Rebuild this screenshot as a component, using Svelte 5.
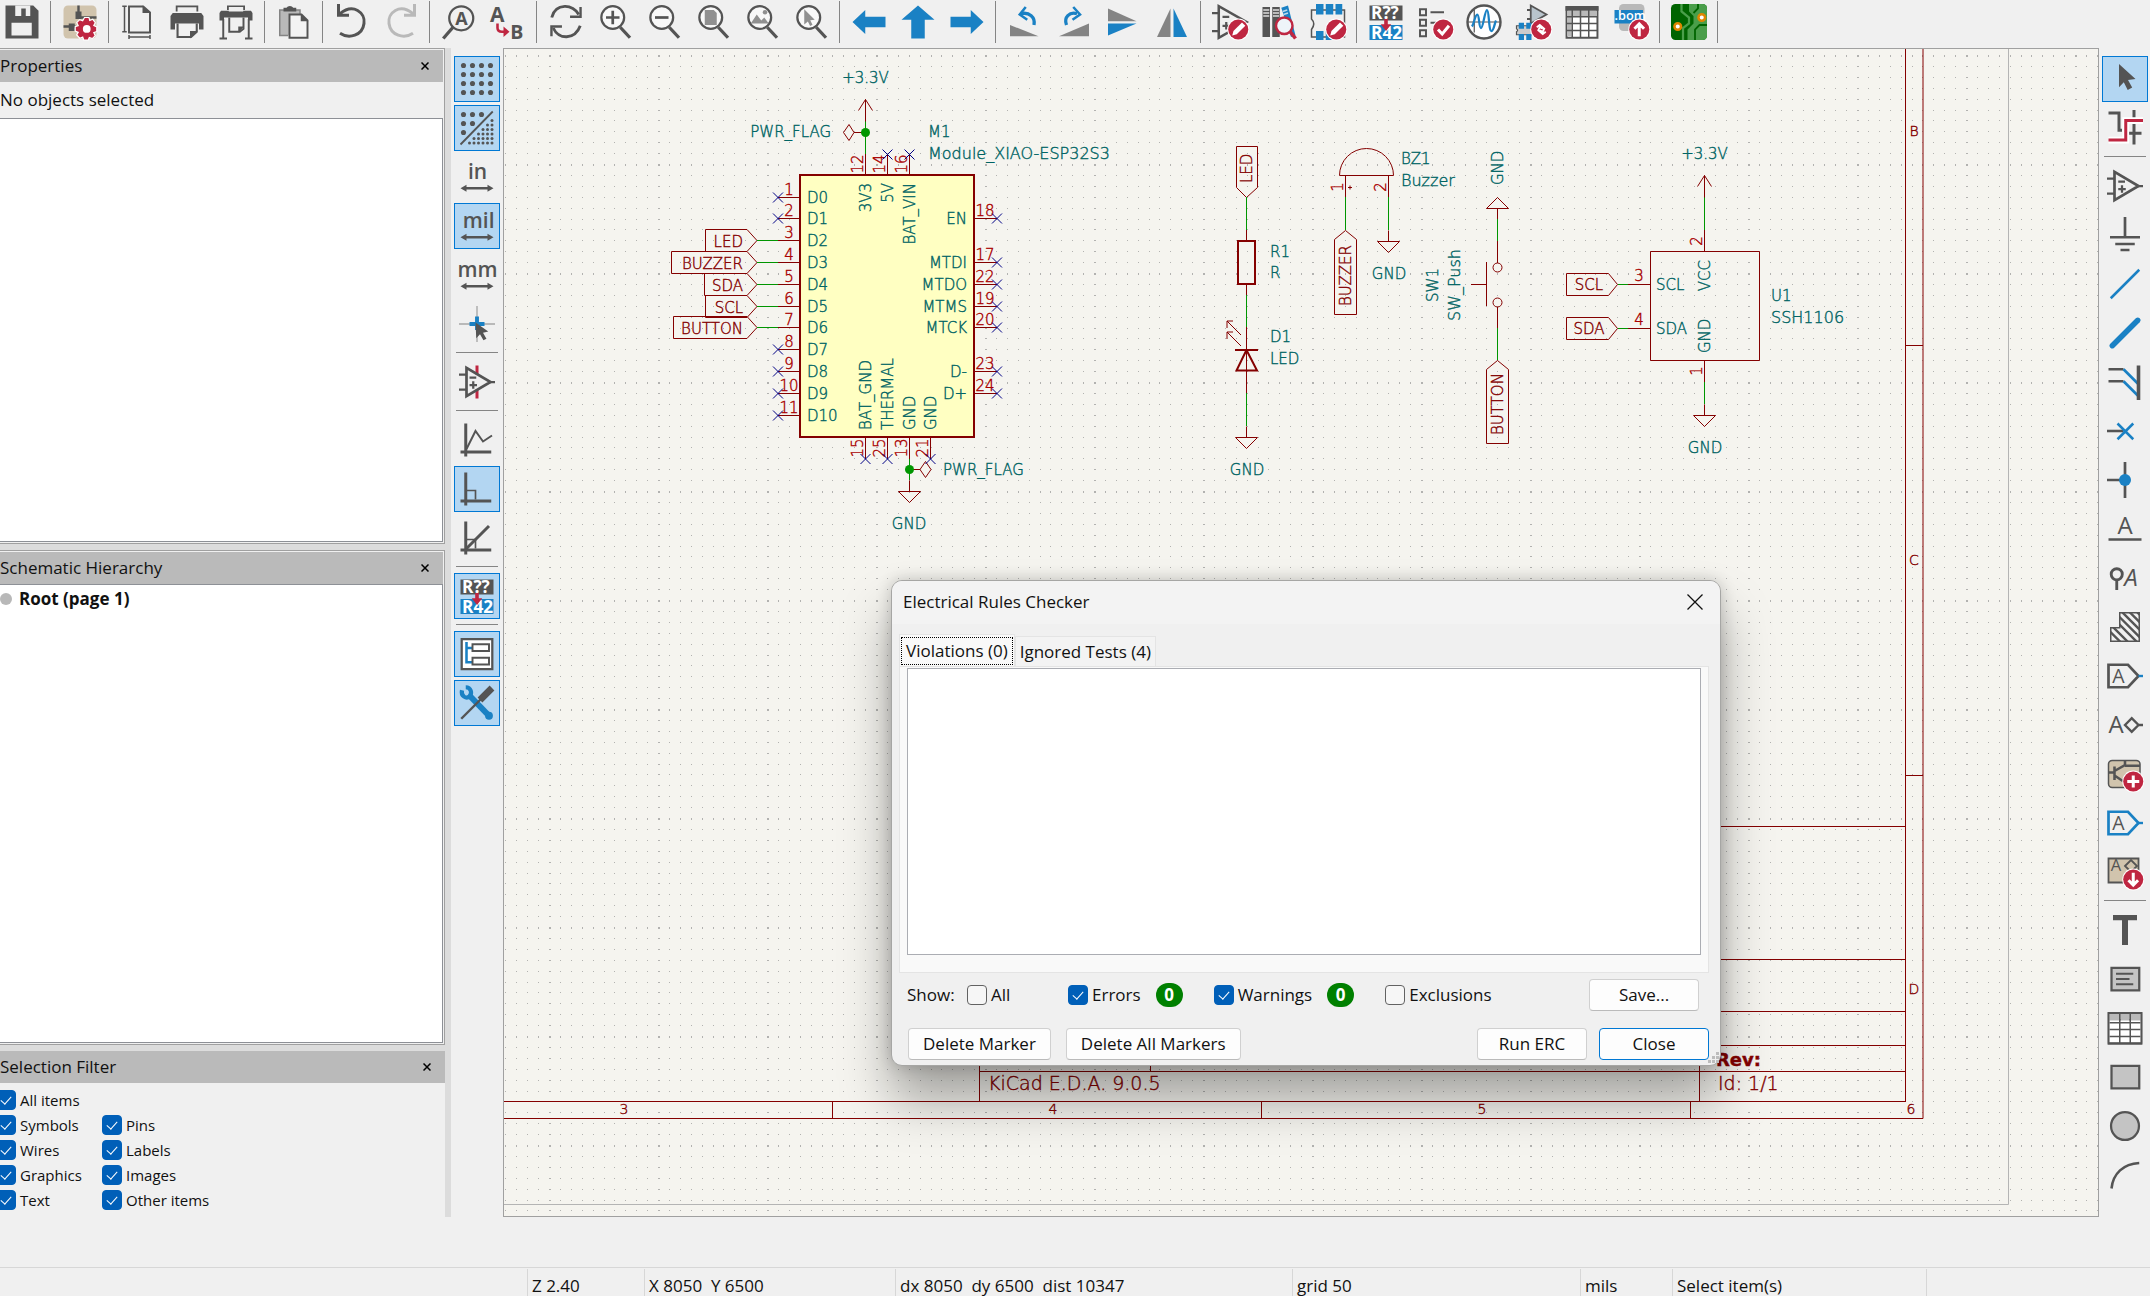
<script lang="ts">
	type Tool = { icon: string; label: string; active?: boolean };

	const sep = null;
	const tool = (icon: string, label: string, active = false): Tool => ({ icon, label, active });

	const topTools: (Tool | null)[] = [
		tool('save', 'Save'), sep,
		tool('setup', 'Schematic Setup'), sep,
		tool('page', 'Page Settings'), tool('print', 'Print'), tool('plot', 'Plot'), sep,
		tool('paste', 'Paste'), sep,
		tool('undo', 'Undo'), tool('redo', 'Redo'), sep,
		tool('find', 'Find'), tool('replace', 'Find and Replace'), sep,
		tool('refresh', 'Refresh'), tool('zoomIn', 'Zoom In'), tool('zoomOut', 'Zoom Out'), tool('zoomPage', 'Zoom to Fit'),
		tool('zoomObjects', 'Zoom to Objects'), tool('zoomSelection', 'Zoom to Selection'), sep,
		tool('left', 'Navigate Back'), tool('up', 'Navigate Up'), tool('right', 'Navigate Forward'), sep,
		tool('rotateCcw', 'Rotate Counterclockwise'), tool('rotateCw', 'Rotate Clockwise'), tool('mirrorV', 'Mirror Vertically'),
		tool('mirrorH', 'Mirror Horizontally'), sep,
		tool('symbolEditor', 'Symbol Editor'), tool('library', 'Symbol Library Browser'), tool('footprint', 'Footprint Editor'), sep,
		tool('annotate', 'Annotate Schematic'), tool('erc', 'Electrical Rules Checker'), tool('simulator', 'Simulator'),
		tool('assign', 'Assign Footprints'), tool('table', 'Edit Symbol Fields'), tool('bom', 'Generate BOM'), sep,
		tool('pcb', 'Switch to PCB Editor'), sep
	];

	const leftTools: (Tool | null)[] = [
		tool('grid', 'Show Grid', true), tool('gridOverride', 'Grid Overrides', true), tool('inches', 'Inches'),
		tool('mils', 'Mils', true), tool('mm', 'Millimeters'), tool('crosshair', 'Full-Window Crosshairs'), sep,
		tool('hiddenPins', 'Show Hidden Pins'), sep,
		tool('freeAngle', 'Line Mode Free'), tool('angle90', 'Line Mode 90', true), tool('angle45', 'Line Mode 45'), sep,
		tool('annotate', 'Annotate Automatically', true), sep,
		tool('tree', 'Hierarchy Navigator', true), tool('wrench', 'Properties Manager', true)
	];

	const rightTools: (Tool | null)[] = [
		tool('select', 'Select', true), tool('highlight', 'Highlight Nets'), sep,
		tool('opamp', 'Place Symbols'), tool('ground', 'Place Power Symbols'), tool('wire', 'Draw Wires'), tool('bus', 'Draw Buses'),
		tool('busEntry', 'Wire to Bus Entry'), tool('noConnect', 'No Connect Flag'), tool('junction', 'Place Junction'),
		tool('netLabel', 'Net Label'), tool('directive', 'Directive Label'), tool('ruleArea', 'Rule Area'),
		tool('globalLabel', 'Global Label'), tool('hierLabel', 'Hierarchical Label'), tool('addSheet', 'Draw Sheet'),
		tool('sheetPin', 'Place Sheet Pins'), tool('importPin', 'Import Sheet Pins'), sep,
		tool('text', 'Text'), tool('textBox', 'Text Box'), tool('grayTable', 'Table'), tool('rect', 'Rectangle'),
		tool('circle', 'Circle'), tool('arc', 'Arc')
	];

	const D = '#545454';
	const B = '#1a81c4';
	const R = '#bf2641';
	const line = (d: string, c = D, w = 1.5) => `<path d="${d}" fill="none" stroke="${c}" stroke-width="${w}"/>`;
	const fill = (d: string, c = D) => `<path d="${d}" fill="${c}"/>`;
	const badge = `<circle cx="17.500" cy="17" r="7.300" fill="#fff"/><circle cx="17.500" cy="17" r="6.700" fill="${R}"/>`;
	const pencil = badge + fill('M13.500 21l.8-3 5.700-5.700 2.200 2.200-5.700 5.700z', '#fff');
	const lens = '<circle cx="10.5" cy="9" r="7.6" fill="#f8f8f8" stroke="#545454" stroke-width="1.5"/>' + line('M15.5 15.5l6.5 7', D, 2.2);
	const opampBody = line('M5 2.5v19L21 12z', D, 1.8);
	const axes = fill('M3.5 1h2v18h16v2h-16v2h-2v-2H1v-2h2.5z');
	const letter = (t: string, x: number, y: number, size: number, c = D, extra = '') =>
		`<text x="${x}" y="${y}" font-size="${size}" fill="${c}" font-family="Open Sans, sans-serif" ${extra}>${t}</text>`;
	const gridDots = (pts: number[][], r: number) => pts.map(([x, y]) => `<circle cx="${x}" cy="${y}" r="${r}" fill="${D}"/>`).join('');
	const arrows = fill('M1 19.5l4-2.3v1.5h14v-1.5l4 2.3-4 2.3v-1.5H5v1.5z');
	const cells = line('M1.7 8.5h20.6M1.7 13h20.6M1.7 17.7h20.6M8.5 6v16M15.5 6v16', D, 1);

	const icons: Record<string, string> = {
		save: fill('M1 1h18.5L23 4.5V23H1z') + fill('M7.5 1h10v7h-10zM5 12.5h13.5V21H5z', '#efefef') + fill('M11.5 3h3v5h-3z'),
		setup: '<rect x="1" y="1" width="22" height="22" rx="3" fill="#d1c4ad"/>' + line('M11 1v9M1 15h8M11 9h12', D, 1.6) + fill('M9 5h4v5H9zM4.500 13h4v5h-4z') +
			`<g fill="${R}" stroke="#fff" stroke-width=".8"><path d="M15 9h3l.5 2 2-.8 1.700 2.300-1 1.800 2 1v3l-2 .8 1 2-2 2-2-.8-.7 1.700h-3l-.7-2-2 .8-2-2.200 1-1.700-2-.8v-3l2-.7-1-2 2-2 2 .8z"/></g><circle cx="16.500" cy="16.600" r="2.600" fill="#fff"/>`,
		page: line('M6 1.600h9.500l4.500 4V19H6z', D, 1.300) + line('M1.500 1.500h3M3 1.500v17M1.500 18.500h3M6 22h14M6 20.700v2.600M20 20.700v2.600', D, 1) + fill('M15 1l5 5h-5z'),
		print: fill('M4.500 1h15v4h-15zM2.500 6h19L23 8v9h-3v-4H4v4H1V8z') + fill('M5.700 2.200h12.600V6H5.700z', '#efefef') + line('M5.700 13v9h9l3.800-3.500V13', D, 1.400) + fill('M14 18h5l-5 5z'),
		plot: fill('M6 1h12v3H6zM2 4.500h20l1 1.500v5h-3v-2H4v2H1V6z') + fill('M7.200 2h9.600v3H7.200z', '#efefef') + line('M7.500 9v9.500h7l2.500-2V9M3.500 10v13M20.500 10v13M1 23h5M18 23h5', D, 1.300) + fill('M13.500 15h4l-4 4z'),
		paste: '<path d="M2 4h14v17H2z" fill="#b9b9b9"/>' + line('M2.500 4v17h5.500M2 4h14v3', '#848484', 1) + fill('M5 2.500h2a2.500 2 0 0 1 4.500 0h2V5H5z') +
			'<path d="M9 7h8l4 4v11.500H9z" fill="#f3f3f3" stroke="#545454" stroke-width="1.300"/>' + fill('M16.500 6.500l5 5h-5z'),
		undo: line('M4 6.500C13-1 21 6 20 13c-1 8-10 10.500-16 6.500', D, 2) + line('M3 0v7.500h7', D, 2),
		redo: line('M20 6.500C11-1 3 6 4 13c1 8 10 10.500 16 6.500', '#b9b9b9', 2) + line('M21 0v7.500h-7', '#b9b9b9', 2),
		find: '<circle cx="13.500" cy="9.500" r="8" fill="none" stroke="#545454" stroke-width="1.500"/>' + line('M8 15.500L1.500 23', D, 2.200) + letter('A', 9.5, 13.8, 12, D, 'font-weight="700"'),
		replace: letter('A', 0, 12, 14, D, 'font-weight="700"') + letter('B', 13.5, 23, 13, D, 'font-weight="700"') + line('M5 13v3q0 2.500 3 2.500h2', R, 1.700) + fill('M9 15l4 3.500L9 22z', R),
		refresh: line('M2.500 9C5-1 17 0 20.500 7M21.500 14.500C18 24 7 24 3.500 16', D, 1.900) + line('M21.700 2v6.500h-7M2.300 21.500V15h7', D, 1.600),
		zoomIn: lens + line('M10.500 4.500v9M6 9h9', D, 1.800),
		zoomOut: lens + line('M6 9h9', D, 1.800),
		zoomPage: lens + fill('M6.500 4h6l2 2v8h-8z', '#909090'),
		zoomObjects: lens + fill('M4.500 13l4-6 3 4 2-2 3 4z', '#909090') + '<circle cx="14" cy="5.500" r="1.500" fill="#909090"/>',
		zoomSelection: lens + fill('M7.500 3.500l7 7-3 .3 1.500 3-1.600.8-1.500-3-2.400 2z', '#909090'),
		left: fill('M1 12l8.500-8v4.500H23v7H9.500V20z', B),
		up: fill('M12 1l11 9.500h-6.500V23h-9V10.500H1z', B),
		right: fill('M23 12l-8.500-8v4.500H1v7h13.500V20z', B),
		rotateCcw: fill('M2 14v7.500h19z', '#848484') + line('M18 14c1-5-3-9-9-7.500', B, 2.200) + line('M12.500 2L8.500 7l5 3.500', B, 1.700),
		rotateCw: fill('M22 13v8.500H2z', '#848484') + line('M7 14C5 9 9 5 14 6.500', B, 2.200) + line('M11.500 2l4.500 5-5 3.500', B, 1.700),
		mirrorV: fill('M2 3v8.500h19z', '#848484') + fill('M2 13h19L2 21z', B),
		mirrorH: fill('M11 3v19H2z', '#848484') + fill('M13 3v19h9z', B),
		symbolEditor: line('M4.500 1.500v21L23 12z', D, 1.700) + line('M0 6h4.500M0 18h4.500M7 8.500h4.500M7 14.500h5M9.500 12v5', D, 1.500) + pencil,
		library: fill('M1 2h5v20H1zM7.500 2h5v20h-5z') + line('M1.500 4h4M1.500 6h4M1.500 8h4M8 4h4M8 6h4M8 8h4', '#ddd', 1) + fill('M13.500 2.500l4.500-1.500 5 20-3 1z', B) + line('M14.500 5l3-1M15 7l3-1', '#bcd9ec', 1) +
			`<circle cx="15.500" cy="14.500" r="5.500" fill="#eef4f9" stroke="${R}" stroke-width="1.600"/>` + line('M19.500 18.500l3.500 4.500', R, 2.400),
		footprint: '<path d="M1 4h22v18H1v-5q3-4 0-7z" fill="#f0f0f0" stroke="#545454" stroke-width="1"/>' + fill('M4 0h5v7H4zM10.500 0h5v7h-5zM17 0h4.500v7H17zM4 18h5v6H4zM10.500 18h4v6h-4z', B) + pencil,
		annotate: fill('M1 1h22v10H1z') + fill('M1 14h22v10H1z', B) + letter('R??', 2, 10, 11.5, '#fff', 'font-weight="700"') + letter('R42', 2, 23.200, 11.5, '#fff', 'font-weight="700"') + fill('M10.800 10h2.400v3.500H15.500L12 18l-3.500-4.500h2.300z', R),
		erc: line('M2 3.500h4v4H2zM2 10.500h4v4H2zM2 17.500h4v4H2zM9 5.500h9M9 12.500h5', D, 1.300) + badge + line('M14 17l2.800 3 4.500-5.500', '#fff', 2),
		simulator: '<circle cx="12" cy="12" r="11" fill="#fff" stroke="#545454" stroke-width="1.600"/>' + line('M5.500 4v15M1 12h22', D, .8) + line('M4 15c1.500-2 2-8 3.500-8S8.500 16 10 16 12.500 4 14 4s1 14 3 14c1.500 0 2-5 3-7', B, 1.500),
		assign: fill('M10 1l11 6.500L10 13z', '#b8c4cc') + line('M10.500 1v12L21 7zM8 4h3M8 10h3', D, 1.200) + '<path d="M1 14.500h14v6H1v-2q1.500-1 0-2z" fill="#ccc" stroke="#545454" stroke-width=".8"/>' + fill('M2.500 12.500h3.500v4H2.500zM7.500 12.500h3.500v4H7.500zM2.500 20h3.500v4H2.500zM7.500 20h3.500v4H7.500z', B) + badge + line('M14.500 15.500l2-1.500 3 2.500-1 2-2-1M20.500 18.500l-2 1.500-3-2.500 1-2 2 1', '#fff', 1.200),
		table: '<path d="M1.700 2h20.600v20.500H1.700z" fill="#fff" stroke="#545454" stroke-width="1.300"/>' + fill('M2 4.500h20v4H2zM2 4.500h3v17H2z', '#b9b9b9') + fill('M1 1.500h22v3H1z') + line('M1.700 8.500h20.600M1.700 13h20.600M1.700 17.700h20.600M5.500 4v18M11 4v18M16.500 4v18', D, 1),
		bom: '<rect x="4" y="0" width="17" height="18" rx="3" fill="#b9b9b9"/>' + fill('M1 4h19v9H1z', B) + letter('.bom', 1, 10.800, 8.5, '#fff', 'font-weight="600"') + badge + line('M17.500 21.500v-8M14.300 16.500l3.200-3.200 3.200 3.200', '#fff', 2),
		pcb: '<rect x="0" y="0" width="24" height="24" rx="3" fill="#006400"/><path d="M14 0h7q3 0 3 3v18q0 3-3 3h-10v-7l4-4V8l-3-3V0z" fill="#4a9e4a"/>' + line('M7 0v5l5 4v4l-4 3v8', '#4a9e4a', 1.500) + line('M18 0v3l-3 3M24 14h-5l-3 3v7', '#006400', 1.200) +
			'<circle cx="4.500" cy="15" r="2.200" fill="#fff" stroke="#e08600" stroke-width="1.700"/><circle cx="20.500" cy="9" r="2.200" fill="#fff" stroke="#e08600" stroke-width="1.700"/>',
		grid: gridDots([3, 9, 15, 21].flatMap((x) => [3, 9, 15, 21].map((y) => [x, y])), 1.7),
		gridOverride: gridDots([[3, 3], [9, 3], [15, 3], [3, 9], [9, 9], [3, 15]], 1.7) + line('M1 23L22.500 1', D, 1.200) +
			gridDots([[22, 7], [22, 10], [19, 10], [22, 13], [19, 13], [16, 13], [22, 16], [19, 16], [16, 16], [13, 16], [22, 19], [19, 19], [16, 19], [13, 19], [10, 19], [22, 22], [19, 22], [16, 22], [13, 22], [10, 22], [7, 22]], 1),
		inches: letter('in', 6, 13, 14, D, 'font-weight="600"') + arrows,
		mils: letter('mil', 2.5, 13, 14, D, 'font-weight="600"') + arrows,
		mm: letter('mm', -1, 13, 14, D, 'font-weight="600"') + arrows,
		crosshair: line('M12 0v24M0 12h24', '#b9b9b9', 1.200) + line('M12 7v9M7 12h10', B, 2.600) + fill('M11 11l8.500 6-3.500.8 2.300 4-2 1-2.300-4-2.500 2.700z'),
		opamp: opampBody + line('M0 7h5M0 17h5M20 12h4M7.500 9h4.500M7.500 14h5M10 11.500v5', D, 1.500),
		hiddenPins: line('M12 1v6M12 17v6', R, 2) + opampBody + line('M0 7h5M0 17h5M20 12h4M7 9h4.500M7 14h5M9.500 11.500v5', D, 1.500),
		freeAngle: axes + line('M5 18l6-12 5 7 6-4', D, 1.300),
		angle90: axes + line('M5 13h6v6', D, 1.100),
		angle45: axes + line('M5 19L20 4', D, 2) + line('M5 13h6v6', D, 1.100),
		tree: '<path d="M1.800 2h20.400v20H1.800z" fill="#fff" stroke="#545454" stroke-width="1.500"/>' + line('M5 4v13.500h4M5 8h4', B, 1.700) + line('M9 5.500h11v4.500H9zM9 14.500h11v4.500H9z', D, 1.300),
		wrench: line('M6.500 6.500L19.500 20', B, 4) + line('M2 3.500c-1 4 3 6 5 4s1-6-2.500-6', B, 2.800) + `<circle cx="20" cy="20.500" r="2.600" fill="${B}"/>` + line('M1.500 22.500L15 9', D, 1.600) + line('M14 10l8-8', D, 4.500),
		select: fill('M8 2l11 10-5 .7 2.800 5-3 1.700-2.600-5.200L8 17.500z'),
		highlight: line('M1 2h7v10M8 6v7.500h2M18 0v23M11 15.500h12', D, 2) + line('M1 20h11.500V7H24', '#fff', 4.500) + line('M1 20h11.500V7H24', R, 2),
		ground: line('M12 0v13', D, 1.800) + line('M2 13.500h20M5.500 18h13M9 22h6', D, 1.800),
		wire: line('M2.500 21.500l19-19', B, 1.700),
		bus: `<path d="M3.500 20.500l17-17" stroke="${B}" stroke-width="3.600" stroke-linecap="round"/>`,
		busEntry: line('M1 3.500h10M1 11.500h10', D, 1.600) + line('M11 3.500l10 10M11 11.500l10 10', B, 1.800) + line('M21 1v23', D, 2.400),
		noConnect: line('M0 12h11', D, 1.700) + line('M7 7l10.500 10.500M17.500 7L7 17.500', B, 1.700),
		junction: line('M12 0v24M0 12h12', D, 1.800) + `<circle cx="12" cy="12" r="4" fill="${B}"/>`,
		netLabel: letter('A', 7, 15.5, 16) + line('M1 19h22', D, 1.700),
		directive: '<circle cx="6.500" cy="9.500" r="3.700" fill="none" stroke="#545454" stroke-width="1.900"/>' + line('M6.500 13v7', D, 1.900) + letter('A', 11.500, 17.500, 16, D, 'font-style="italic"'),
		ruleArea: '<clipPath id="hatch"><path d="M8 2h14v20H2V12h6z"/></clipPath><g clip-path="url(#hatch)">' + line('M2 10l14 14M2 15l9 9M5 7l18 18M7 4l18 18M7-1l18 18M13 0l12 12M18 0l8 8', D, 1.600) + '</g>' + line('M8.500 2.500h13v19h-19v-9h6z', D, 1),
		globalLabel: line('M1 4.500h13L21 12l-7 7.500H1z', D, 1.800) + letter('A', 3.500, 16.800, 13) + line('M21 12h3', B, 1.600),
		hierLabel: letter('A', 1, 17.500, 16) + line('M12 12l4.500-4.500L21 12l-4.500 4.500zM21 12h3', D, 1.600),
		addSheet: '<rect x="1" y="3" width="21" height="18" rx="2.500" fill="#d1c4ad" stroke="#545454"/>' + line('M1 11h4M5 7v9M5 10l7-4V3M5 13l6 4M12 6.500h10', D, 1.700) + badge + line('M17.500 13v8M13.500 17h8', '#fff', 2),
		sheetPin: line('M1 4.500h13L21 12l-7 7.500H1z', B, 1.800) + letter('A', 3.500, 16.800, 13) + line('M21 12h3', B, 1.600),
		importPin: '<path d="M1 3h20v16H1z" fill="#d1c4ad" stroke="#545454" stroke-width="1.200"/>' + letter('A', 2.500, 11.500, 11) + line('M12 8l4-4 4 4-4 4z', D, 1.200) + badge + line('M17.500 12.500v8M14.300 17.500l3.200 3.200 3.200-3.200', '#fff', 2),
		text: fill('M4 2h16v3.500h-6V22h-4V5.500H4z'),
		textBox: '<path d="M3 4.500h18.500v15H3z" fill="#c4c4c4" stroke="#545454" stroke-width="1.500"/>' + line('M6 8.500h11.500M6 12h9M6 15.500h11.500', D, 1.300),
		grayTable: '<path d="M1 2h22v20H1z" fill="#fff" stroke="#545454"/>' + fill('M1 2h22v5H1z', '#b9b9b9') + line('M1 2h22v20.500H1z', D, 1.200) + cells + line('M8.500 2v5M15.500 2v5', D, 1),
		rect: '<path d="M3 4.500h18.500v15H3z" fill="#c4c4c4" stroke="#545454" stroke-width="1.500"/>',
		circle: '<circle cx="12" cy="12" r="9.300" fill="#c4c4c4" stroke="#545454" stroke-width="1.500"/>',
		arc: line('M3 21C4 11 11 4.500 21.500 4', D, 1.700)
	};

	const filters = ['Symbols', 'Pins', 'Wires', 'Labels', 'Graphics', 'Images', 'Text', 'Other items'];

	let viewWidth = $state(0);
	let viewHeight = $state(0);

	// 50 mil grid, every tenth dot is heavier
	const pitch = 10.9;
	const dots = $derived.by(() => {
		let d = '';
		for (let r = -10; r * pitch + 115 < viewHeight; r++) {
			for (let c = -24; c * pitch + 263 < viewWidth; c++) {
				const w = c % 10 === 0 ? 2 : 1;
				const h = r % 10 === 0 ? 2 : 1;
				d += `M${Math.round(263 + c * pitch)} ${Math.round(115 + r * pitch)}h${w}v${h}h-${w}z`;
			}
		}
		return d;
	});

	// XIAO module pins
	const row = (n: number) => Math.floor(197 + n * 21.8) + 0.5;
	const leftPins = ['D0', 'D1', 'D2', 'D3', 'D4', 'D5', 'D6', 'D7', 'D8', 'D9', 'D10'];
	const rightPins = [
		{ row: 1, num: 18, name: 'EN' },
		{ row: 3, num: 17, name: 'MTDI' },
		{ row: 4, num: 22, name: 'MTDO' },
		{ row: 5, num: 19, name: 'MTMS' },
		{ row: 6, num: 20, name: 'MTCK' },
		{ row: 8, num: 23, name: 'D-' },
		{ row: 9, num: 24, name: 'D+' }
	];
	const topPins = [
		{ x: 865.5, num: 12, name: '3V3' },
		{ x: 887.5, num: 14, name: '5V' },
		{ x: 909.5, num: 16, name: 'BAT_VIN' }
	];
	const bottomPins = [
		{ x: 865.5, num: 15, name: 'BAT_GND' },
		{ x: 887.5, num: 25, name: 'THERMAL' },
		{ x: 909.5, num: 13, name: 'GND' },
		{ x: 930.5, num: 21, name: 'GND' }
	];
	const netLabels = [
		{ row: 2, left: 705.5, name: 'LED' },
		{ row: 3, left: 671.5, name: 'BUZZER' },
		{ row: 4, left: 704.5, name: 'SDA' },
		{ row: 5, left: 705.5, name: 'SCL' },
		{ row: 6, left: 673.5, name: 'BUTTON' }
	];
	const noConnects = [
		...[0, 1, 7, 8, 9, 10].map((n) => [778, row(n)]),
		...rightPins.map((p) => [997, row(p.row)]),
		[887.5, 154.5], [909.5, 154.5], [865.5, 459], [887.5, 459], [930.5, 459]
	];
</script>

{#snippet toolbar(tools: (Tool | null)[], name: string, vertical: boolean)}
	<div class="toolbar" class:vertical role="toolbar" aria-label={name}>
		{#each tools as t}
			{#if t}
				<button type="button" class="tool" class:active={t.active} aria-label={t.label}>
					<svg viewBox="0 0 24 24">{@html icons[t.icon]}</svg>
				</button>
			{:else}
				<span class="sep"></span>
			{/if}
		{/each}
	</div>
{/snippet}

{#snippet caption(title: string)}
	<header class="caption">
		<h2>{title}</h2>
		<button type="button" aria-label="Close {title}">
			<svg viewBox="0 0 8 8"><path d="M.5.5l7 7M7.500.5l-7 7" stroke="#000" stroke-width="1.500" /></svg>
		</button>
	</header>
{/snippet}

{#snippet gnd(x: number, y: number)}
	<path class="sym" d="M{x} {y - 11}v11m-11 0h22l-11 11z" />
{/snippet}

{#snippet power(x: number, y: number)}
	<path class="sym" d="M{x} {y + 22}V{y}m-7 11l7-11 7 11" />
	<text class="field" {x} y={y - 17} text-anchor="middle">+3.3V</text>
{/snippet}

{#snippet upright(text: string, x: number, y: number, cls: string, anchor: string)}
	<text class={cls} transform="translate({x} {y}) rotate(-90)" text-anchor={anchor}>{text}</text>
{/snippet}

{#snippet check(label: string, checked: boolean)}
	<label class="check"><input type="checkbox" {checked} />{label}</label>
{/snippet}

<div class="app">
	{@render toolbar(topTools, 'Main toolbar', false)}

	<div class="workspace">
		<aside class="panels">
			<section class="panel framed">
				{@render caption('Properties')}
				<p class="hint">No objects selected</p>
				<div class="list"></div>
			</section>
			<section class="panel framed">
				{@render caption('Schematic Hierarchy')}
				<div class="list">
					<p class="root"><span class="bullet"></span>Root (page 1)</p>
				</div>
			</section>
			<section class="panel filter">
				{@render caption('Selection Filter')}
				<div class="filters">
					<div class="all">{@render check('All items', true)}</div>
					{#each filters as f}
						{@render check(f, true)}
					{/each}
				</div>
			</section>
		</aside>

		{@render toolbar(leftTools, 'Display options', true)}

		<main class="canvas" bind:clientWidth={viewWidth} bind:clientHeight={viewHeight}>
			<svg class="sheet">
				<path d={dots} fill="#b2b2b0" shape-rendering="crispEdges" />
				<g transform="translate(-504 -49)">
					<path class="edge" d="M504 1204.500H2008.500V49" />

					<!-- drawing frame and title block -->
					<path class="frame" d="M504 1101.500H1906M504 1118.500H1923V49M1905.500 49V1101.500M832.500 1101v17M1261.500 1101v17M1690.500 1101v17M1906 345.500h17M1906 775.500h17" />
					<path class="frame" d="M979.500 1101V826.500H1906M979 959.500h927M979 1011.500h927M979 1045.500h927M979 1071.500h927M1150.500 1045v26M1699.500 1045v56" />
					<g class="zone" text-anchor="middle">
						<text x="1914" y="136">B</text>
						<text x="1914" y="565">C</text>
						<text x="1914" y="994">D</text>
						<text x="624" y="1114">3</text>
						<text x="1053" y="1114">4</text>
						<text x="1482" y="1114">5</text>
						<text x="1911" y="1114">6</text>
					</g>
					<text class="title" x="988" y="1090">KiCad E.D.A. 9.0.5</text>
					<text class="title" x="1718" y="1090">Id: 1/1</text>
					<text class="title rev" x="1716" y="1066">Rev:</text>

					<!-- M1 -->
					<rect class="body" x="800" y="175" width="174" height="262" />
					<text class="field" x="928" y="137">M1</text>
					<text class="field value" x="928" y="159">Module_XIAO-ESP32S3</text>
					{#each leftPins as name, n}
						<path class="sym" d="M778 {row(n)}h22" />
						<text class="num" x="789" y={row(n) - 3} text-anchor="middle">{n + 1}</text>
						<text class="field" x="807" y={row(n) + 5}>{name}</text>
					{/each}
					{#each rightPins as p}
						<path class="sym" d="M975 {row(p.row)}h22" />
						<text class="num" x="985" y={row(p.row) - 3} text-anchor="middle">{p.num}</text>
						<text class="field" x="967" y={row(p.row) + 5} text-anchor="end">{p.name}</text>
					{/each}
					{#each topPins as p}
						<path class="sym" d="M{p.x} 154v21" />
						{@render upright(String(p.num), p.x - 3, 164, 'num', 'middle')}
						{@render upright(p.name, p.x + 5, 183, 'field', 'end')}
					{/each}
					{#each bottomPins as p}
						<path class="sym" d="M{p.x} 437v22" />
						{@render upright(String(p.num), p.x - 3, 448, 'num', 'middle')}
						{@render upright(p.name, p.x + 5, 430, 'field', 'start')}
					{/each}
					{#each netLabels as l}
						<path class="sym" d="M{l.left} {row(l.row) - 11}H747l10 11-10 11H{l.left}z" />
						<path class="net" d="M757 {row(l.row)}h21" />
						<text class="label" x="743" y={row(l.row) + 6} text-anchor="end">{l.name}</text>
					{/each}
					<path class="net" d="M865.500 121v33M909.500 459v21" />
					{@render power(865.5, 99.5)}
					<path class="sym" d="M865 132.500h-11l-5-8-5.500 8 5.500 8 5-8M909 469.500h11l5.500-8 5.500 8-5.500 8-5.500-8" />
					<circle class="joint" cx="865.500" cy="132.500" r="4.500" />
					<circle class="joint" cx="909.500" cy="469.500" r="4.500" />
					<text class="field" x="831" y="137" text-anchor="end">PWR_FLAG</text>
					<text class="field" x="943" y="475">PWR_FLAG</text>
					{@render gnd(909.5, 491.5)}
					<text class="field" x="909" y="529" text-anchor="middle">GND</text>
					{#each noConnects as [x, y]}
						<path class="nc" d="M{x - 5} {y - 5}l10 10m0-10l-10 10" />
					{/each}

					<!-- R1, D1 -->
					<path class="sym" d="M1236.500 146.500h21v41l-11 10-10-10zM1246.500 230v11M1246.500 284v11M1246.500 327v66" />
					<path class="net" d="M1246.500 197v33M1246.500 295v32M1246.500 393v33" />
					<path class="sym thick" d="M1238 241h17v43h-17zM1235 350h23M1246.500 350l-10 20.500h20.500z" />
					<path class="sym" d="M1241 335l-14-14m0 7v-7h6M1241 346l-14-14m0 7v-7h6" />
					{@render upright('LED', 1252, 183, 'label', 'start')}
					<text class="field" x="1270" y="257">R1</text>
					<text class="field" x="1270" y="278">R</text>
					<text class="field" x="1270" y="342">D1</text>
					<text class="field" x="1270" y="364">LED</text>
					{@render gnd(1246.5, 437.5)}
					<text class="field" x="1247" y="475" text-anchor="middle">GND</text>

					<!-- BZ1 -->
					<path class="sym" d="M1339.500 175.500a27 27 0 0 1 54 0zM1345.500 175v22M1388.500 175v22M1345.500 230.500l11 9v75h-22v-75z" />
					<path class="net" d="M1345.500 197v33M1388.500 197v33" />
					{@render upright('1', 1343, 187, 'num', 'middle')}
					{@render upright('2', 1386, 187, 'num', 'middle')}
					<path class="sym" d="M1348 187.500h4M1350 185.500v4" />
					{@render upright('BUZZER', 1351, 306, 'label', 'start')}
					<text class="field" x="1401" y="164">BZ1</text>
					<text class="field value" x="1401" y="186">Buzzer</text>
					{@render gnd(1388.5, 241.5)}
					<text class="field" x="1389" y="279" text-anchor="middle">GND</text>

					<!-- SW1 -->
					<path class="sym" d="M1486.500 208.500h22l-11-11zM1497.500 208v11M1497.500 241v22M1497.500 307v21M1486.500 262v44M1471 284.500h15M1497.500 360.500l11 9v74h-22v-74z" />
					<circle class="sym" cx="1497.500" cy="267.500" r="4.500" />
					<circle class="sym" cx="1497.500" cy="302.500" r="4.500" />
					<path class="net" d="M1497.500 219v22M1497.500 328v32" />
					{@render upright('GND', 1503, 185, 'field', 'start')}
					{@render upright('SW1', 1438, 285, 'field', 'middle')}
					{@render upright('SW_Push', 1460, 285, 'field value', 'middle')}
					{@render upright('BUTTON', 1503, 435, 'label', 'start')}

					<!-- U1 -->
					<path class="sym" d="M1650.500 251.500h109v109h-109zM1704.500 230v21M1704.500 360v22M1628 284.500h22M1628 328.500h22" />
					<path class="sym" d="M1566.500 273.500h42l9 11-9 11h-42zM1566.500 317.500h42l9 11-9 11h-42z" />
					<path class="net" d="M1704.500 197v33M1704.500 382v22M1618 284.500h10M1618 328.500h10" />
					{@render power(1704.5, 175.5)}
					{@render gnd(1704.5, 415.5)}
					<text class="field" x="1705" y="453" text-anchor="middle">GND</text>
					<text class="label" x="1589" y="290" text-anchor="middle">SCL</text>
					<text class="label" x="1589" y="334" text-anchor="middle">SDA</text>
					<text class="num" x="1639" y="281" text-anchor="middle">3</text>
					<text class="num" x="1639" y="325" text-anchor="middle">4</text>
					<text class="field" x="1656" y="290">SCL</text>
					<text class="field" x="1656" y="334">SDA</text>
					{@render upright('2', 1702, 241, 'num', 'middle')}
					{@render upright('1', 1702, 371, 'num', 'middle')}
					{@render upright('VCC', 1710, 260, 'field', 'end')}
					{@render upright('GND', 1710, 353, 'field', 'start')}
					<text class="field" x="1771" y="301">U1</text>
					<text class="field value" x="1771" y="323">SSH1106</text>
				</g>
			</svg>

			<div class="dialog" role="dialog" aria-labelledby="erc-title">
				<header class="dialog-title">
					<h1 id="erc-title">Electrical Rules Checker</h1>
					<button type="button" aria-label="Close dialog">
						<svg viewBox="0 0 16 16"><path d="M.5.500l15 15M15.500.500l-15 15" stroke="#111" stroke-width="1.300" /></svg>
					</button>
				</header>
				<div class="tabs" role="tablist">
					<button type="button" role="tab" class="tab current" aria-selected="true"><span>Violations (0)</span></button>
					<button type="button" role="tab" class="tab" aria-selected="false">Ignored Tests (4)</button>
				</div>
				<div class="tab-page"><div class="violations"></div></div>
				<div class="show">
					<span class="show-label">Show:</span>
					<div class="opt all-opt">{@render check('All', false)}</div>
					<div class="opt">{@render check('Errors', true)}<b class="count">0</b></div>
					<div class="opt">{@render check('Warnings', true)}<b class="count">0</b></div>
					<div class="opt">{@render check('Exclusions', false)}</div>
					<button type="button" class="btn save">Save...</button>
				</div>
				<div class="actions">
					<div class="markers">
						<button type="button" class="btn auto">Delete Marker</button>
						<button type="button" class="btn auto">Delete All Markers</button>
					</div>
					<button type="button" class="btn">Run ERC</button>
					<button type="button" class="btn primary">Close</button>
				</div>
				<svg class="grip" viewBox="0 0 12 12"><path d="M9 0h3v3H9zM5 4h3v3H5zM9 4h3v3H9zM1 8h3v3H1zM5 8h3v3H5zM9 8h3v3H9z" fill="#bcbcbc" /></svg>
			</div>
		</main>

		{@render toolbar(rightTools, 'Drawing tools', true)}
	</div>

	<footer class="status">
		<span class="cell lead"></span>
		<span class="cell zoom">Z 2.40</span>
		<span class="cell pos">X 8050&nbsp; Y 6500</span>
		<span class="cell delta">dx 8050&nbsp; dy 6500&nbsp; dist 10347</span>
		<span class="cell snap">grid 50</span>
		<span class="cell units">mils</span>
		<span class="cell hint-cell">Select item(s)</span>
		<span class="cell"></span>
	</footer>
</div>

<style>
	:global(*) {
		box-sizing: border-box;
	}

	:global(body) {
		margin: 0;
		overflow: hidden;
	}

	.app {
		display: flex;
		flex-direction: column;
		height: 100vh;
		background: #f0f0f0;
		color: #111;
		font-family: 'Open Sans', 'Noto Sans', sans-serif;
		font-size: 17px;
		line-height: 20px;
	}

	button {
		font: inherit;
		color: inherit;
		padding: 0;
		border: 0;
		background: none;
	}

	h1, h2, p {
		margin: 0;
		font-size: inherit;
		font-weight: 400;
	}

	.toolbar {
		display: flex;
		flex: none;
		gap: 3px;
		height: 48px;
		margin: -1px 0 1px -1px;
	}

	.tool {
		display: flex;
		flex: none;
		align-items: center;
		justify-content: center;
		width: 46px;
		height: 46px;
		border: 1px solid transparent;
	}

	.tool.active {
		background: #b3d6f2;
		border-color: #0078d4;
	}

	.tool svg {
		flex: none;
		width: 36px;
		height: 36px;
		overflow: visible;
	}

	.sep {
		flex: none;
		width: 1px;
		height: 42px;
		margin: 2px 3px 0 2px;
		background: #858585;
	}

	.toolbar.vertical {
		flex-direction: column;
		height: auto;
		margin: 0;
		padding: 8px 3px;
		overflow: hidden;
	}

	.canvas + .toolbar.vertical {
		padding-right: 2px;
	}

	.vertical .sep {
		width: 42px;
		height: 1px;
		margin: 2px 0 3px 2px;
	}

	.workspace {
		display: flex;
		flex: 1;
		min-height: 0;
		margin-bottom: 50px;
	}

	.panels {
		display: flex;
		flex: none;
		flex-direction: column;
		gap: 6px;
		width: 451px;
		padding-right: 6px;
		background: #dcdcdc;
	}

	.panel {
		display: flex;
		flex-direction: column;
		background: #f0f0f0;
	}

	.framed {
		flex: 1;
		padding: 1px 1px 1px 0;
		border: 1px solid #a0a0a0;
		border-left: 0;
	}

	.caption {
		display: flex;
		align-items: center;
		justify-content: space-between;
		height: 32px;
		padding-right: 14px;
		background: #bababa;
	}

	.caption svg {
		display: block;
		width: 8px;
		height: 8px;
	}

	.hint {
		padding: 8px 0;
	}

	.list {
		flex: 1;
		background: #fff;
		border: 1px solid #8d9096;
		border-left: 0;
	}

	.root {
		display: flex;
		align-items: center;
		gap: 7px;
		padding-top: 4px;
		font-weight: 700;
	}

	.bullet {
		width: 12px;
		height: 12px;
		border-radius: 50%;
		background: #b8b8b8;
	}

	.filters {
		display: grid;
		grid-template-columns: 106px auto;
		justify-content: start;
		gap: 5px 0;
		margin-left: -4px;
		padding: 7px 0;
		font-size: 15px;
	}

	.all {
		grid-column: span 2;
	}

	.check {
		display: flex;
		align-items: center;
		gap: 4px;
		height: 20px;
	}

	input {
		appearance: none;
		flex: none;
		display: grid;
		place-items: center;
		width: 20px;
		height: 20px;
		margin: 0;
		border: 1px solid #626262;
		border-radius: 4px;
		background: #f6f6f6;
	}

	input:checked {
		border-color: #005fb8;
		background: #005fb8;
	}

	input:checked::after {
		content: '';
		width: 5px;
		height: 9px;
		margin-top: -3px;
		border: solid #fff;
		border-width: 0 1px 1px 0;
		transform: rotate(42deg);
	}

	.canvas {
		position: relative;
		flex: 1;
		min-width: 0;
		overflow: hidden;
		border: 1px solid #a0a0a0;
		background: #f5f4ef;
	}

	.sheet {
		display: block;
		width: 100%;
		height: 100%;
		font-family: 'DejaVu Sans', sans-serif;
		font-size: 15px;
		font-weight: 200;
	}

	.edge, .frame, .sym, .net, .nc {
		fill: none;
		stroke-width: 1;
	}

	.edge {
		stroke: #b4b4b4;
	}

	.frame, .sym {
		stroke: #840000;
	}

	.sym.thick {
		stroke-width: 2;
	}

	.body {
		fill: #ffffc2;
		stroke: #840000;
		stroke-width: 2;
	}

	.net {
		stroke: #009600;
	}

	.joint {
		fill: #009600;
	}

	.nc {
		stroke: #000084;
	}

	.sheet text {
		fill: currentColor;
		stroke: currentColor;
		stroke-width: 0.4;
	}

	.field {
		color: #006464;
	}

	.value {
		font-size: 16px;
	}

	.num {
		color: #a90000;
	}

	.label, .zone, .title {
		color: #840000;
	}

	.zone {
		font-size: 14px;
	}

	.title {
		font-size: 19px;
	}

	.title.rev {
		font-size: 18px;
		font-weight: 700;
	}

	.dialog {
		position: absolute;
		left: 387px;
		top: 531px;
		display: flex;
		flex-direction: column;
		width: 830px;
		padding-bottom: 5px;
		border: 1px solid #a6a6a4;
		border-radius: 11px;
		background: #f0f0f0;
		box-shadow: 0 0 16px rgba(0, 0, 0, 0.2), 0 34px 50px rgba(0, 0, 0, 0.34);
	}

	.dialog-title {
		display: flex;
		align-items: center;
		justify-content: space-between;
		height: 43px;
		padding: 0 17px 2px 11px;
		border-radius: 10px 10px 0 0;
		background: #f3f3f3;
	}

	.dialog-title svg {
		display: block;
		width: 16px;
		height: 16px;
	}

	.tabs {
		display: flex;
		align-items: flex-end;
		margin: 10px 0 0 7px;
	}

	.tab {
		height: 30px;
		padding: 0 4px;
		border: 1px solid #e4e4e4;
		border-bottom: 0;
		background: #f3f3f3;
	}

	.tab.current {
		height: 32px;
		padding: 1px;
		background: #f9f9f9;
	}

	.tab.current span {
		display: block;
		padding: 3px 4px;
		border: 1px dotted #000;
	}

	.tab-page {
		margin: 0 11px 0 7px;
		padding: 1px 7px 17px;
		border: 1px solid #e4e4e4;
		background: #f9f9f9;
	}

	.violations {
		height: 287px;
		border: 1px solid #abadb3;
		background: #fff;
	}

	.show {
		display: flex;
		align-items: center;
		margin: 6px 21px 0 15px;
	}

	.show-label {
		width: 60px;
	}

	.opt {
		display: flex;
		gap: 15px;
		margin-right: 31px;
	}

	.opt.all-opt {
		width: 70px;
	}

	.count {
		width: 27px;
		height: 24px;
		margin: -2px 0;
		border-radius: 12px;
		background: #008000;
		color: #fff;
		line-height: 24px;
		text-align: center;
	}

	.btn {
		width: 110px;
		height: 32px;
		border: 1px solid #d0d0d0;
		border-bottom-color: #bababa;
		border-radius: 4px;
		background: #fdfdfd;
	}

	.btn.auto {
		width: auto;
		padding: 0 14px;
	}

	.btn.primary {
		border-color: #0078d4;
	}

	.save {
		margin-left: auto;
	}

	.actions {
		display: flex;
		gap: 12px;
		margin: 17px 11px 0 16px;
	}

	.markers {
		display: flex;
		flex: 1;
		gap: 15px;
	}

	.grip {
		position: absolute;
		right: 1px;
		bottom: 1px;
		width: 12px;
		height: 12px;
	}

	.status {
		display: flex;
		flex: none;
		height: 29px;
		padding-top: 1px;
		border-top: 1px solid #d7d7d7;
	}

	.cell {
		flex: none;
		padding: 7px 0 0 4px;
		border-left: 1px solid #d7d7d7;
		white-space: nowrap;
	}

	.cell.lead {
		width: 527px;
		border: 0;
	}

	.zoom {
		width: 117px;
	}

	.pos {
		width: 251px;
	}

	.delta {
		width: 397px;
	}

	.snap {
		width: 288px;
	}

	.units {
		width: 92px;
	}

	.hint-cell {
		width: 254px;
	}
</style>
